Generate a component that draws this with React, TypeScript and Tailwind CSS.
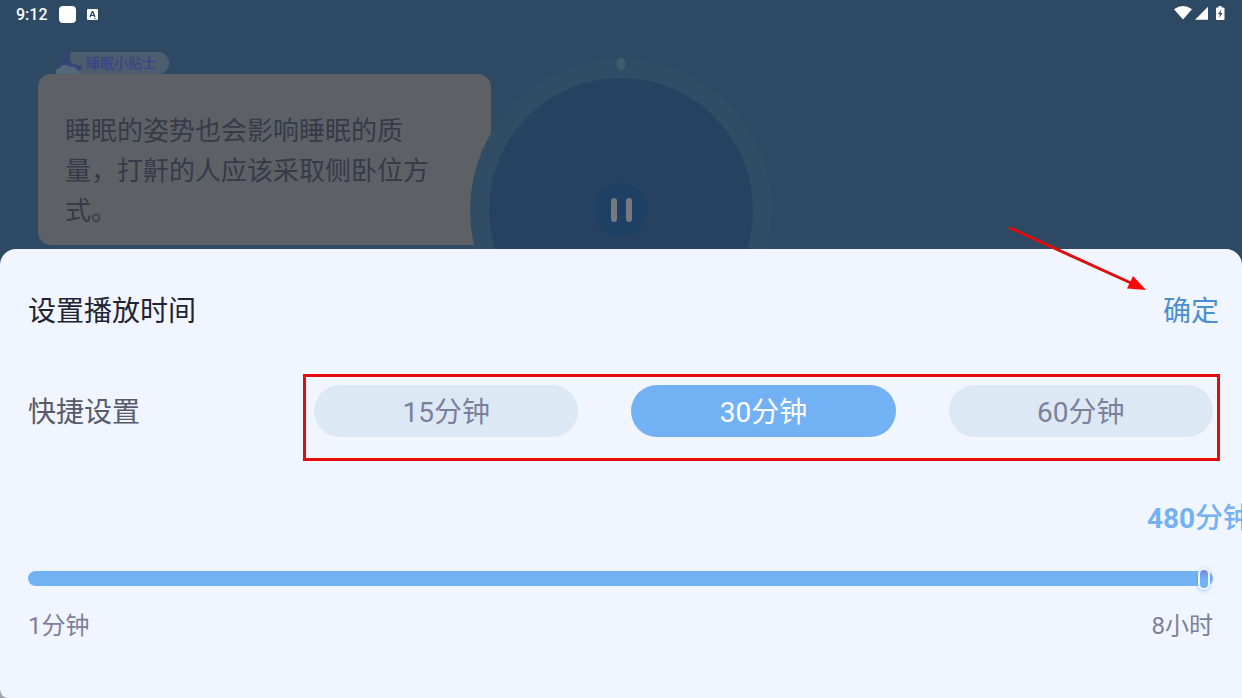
import { useState } from "react";

const presets = [15, 30, 60];
const MIN = 1;
const MAX = 480;

function StatusBar() {
  return (
    <header className="flex h-7 items-center justify-between px-4 text-white">
      <div className="flex items-center gap-[11px]">
        <time className="pt-[2px] text-[16px] leading-5 font-medium">9:12</time>
        <span className="size-[17px] rounded-[4px] bg-white" />
        <svg className="size-[11px]" viewBox="0 0 11 11" aria-hidden="true">
          <rect width="11" height="11" rx="1" fill="#fff" />
          <path d="M3 8 5.2 2.6h.6L8 8M3.9 6.3h3.2" fill="none" stroke="#2d4862" strokeWidth="1.3" />
          <path d="M7 9.6h2.4" stroke="#2d4862" strokeWidth=".7" />
        </svg>
      </div>
      <svg className="h-4 w-[52px]" viewBox="0 0 52 16" fill="#fff" aria-hidden="true">
        <path d="M0 3.2Q9-3 18 3.2L9 13.4z" />
        <path d="M34 .8V13.800H21z" />
        <path d="M44.500 0h3v1.500h2q1 0 1 1v10.500q0 1-1 1h-6.500q-1 0-1-1V2.500q0-1 1-1h1.500z" />
        <path d="M47.300 3.600 44 8.300h1.900l-.7 3.700 3.300-4.900h-2z" fill="#2d4862" />
      </svg>
    </header>
  );
}

function TipCard() {
  return (
    <section className="w-[453px]">
      <div className="ml-[17px] flex h-[22px] w-[114px] items-center">
        <div className="relative flex h-[22px] flex-1 items-center rounded-r-full bg-linear-to-r from-transparent from-10% to-[#4e5d6d] to-15% pl-[31px]">
          <svg className="absolute -top-[2px] left-0 h-[26px] w-[30px]" viewBox="0 0 30 26" aria-hidden="true">
            <defs>
              <linearGradient id="moon" x1="0" y1="0" x2="1" y2="1">
                <stop offset="0" stopColor="#304668" />
                <stop offset="1" stopColor="#38467f" />
              </linearGradient>
            </defs>
            <path d="M2 2H15V20H2z" fill="#2e4963" />
            <path d="M16 .5C8 1 3 6 3 13c0 7 8 11 14 10l8-2c1-2 2-4 2.500-6.500-3 1.500-5 1-7-.5-5 0-8-5-6.500-9 .4-1.800 1-3 2-4.500z" fill="url(#moon)" />
            <path d="M1 24c-1-4 1-6 4-6 1-3 4-4 6-3 2 0 3 1 4 2 3-1 6 0 7 3 2 0 3 2 3 4z" fill="#55677a" />
          </svg>
          <h2 className="text-[14px] leading-5 font-medium whitespace-nowrap text-[#36458a]">睡眠小贴士</h2>
        </div>
      </div>
      <p className="rounded-[13px] bg-[#5d6166] pt-[37px] pr-10 pb-[14px] pl-[27px] text-[26px] leading-10 text-[#363a49]">
        睡眠的姿势也会影响睡眠的质量，打鼾的人应该采取侧卧位方式。
      </p>
    </section>
  );
}

function Dial() {
  return (
    <div className="absolute top-[59px] left-1/2 flex size-[302px] -translate-x-1/2 items-center justify-center rounded-full bg-[#314d66]">
      <span className="absolute -top-[1px] h-3 w-2 rounded-full bg-[#405b69]" />
      <div className="flex size-[264px] items-center justify-center rounded-full bg-[#264260]">
        <button type="button" aria-label="暂停" className="flex size-[54px] items-center justify-center gap-[9px] rounded-full bg-[#1e4062]">
          <span className="h-6 w-[6px] rounded-full bg-[#76797d]" />
          <span className="h-6 w-[6px] rounded-full bg-[#76797d]" />
        </button>
      </div>
    </div>
  );
}

function TimerSheet() {
  const [preset, setPreset] = useState(30);
  const [minutes, setMinutes] = useState(MAX);
  const ratio = (minutes - MIN) / (MAX - MIN);

  return (
    <section role="dialog" aria-labelledby="sheet-title" className="absolute inset-x-0 bottom-0 rounded-t-[16px] bg-[#f1f5ff] pt-[42px] pr-[29px] pb-[54px] pl-7">
      <div className="flex h-[42px] items-center justify-between text-[28px] leading-[42px]">
        <h1 id="sheet-title" className="text-[#212434]">设置播放时间</h1>
        <button type="button" className="-mr-[6px] text-[#4a90d0]">确定</button>
      </div>

      <div className="mt-[52px] flex items-center text-[28px] leading-[42px]">
        <span id="quick-label" className="w-[286px] shrink-0 pt-1 text-[#575b6c]">快捷设置</span>
        <div role="group" aria-labelledby="quick-label" className="relative grid flex-1 grid-cols-3 gap-[53px]">
          {presets.map((value) => (
            <button
              key={value}
              type="button"
              aria-pressed={preset === value}
              onClick={() => setPreset(value)}
              className={
                preset === value
                  ? "h-[52px] rounded-full bg-[#73b1f5] pt-1 text-white"
                  : "h-[52px] rounded-full bg-[#dce8f4] pt-1 text-[#7c809b]"
              }
            >
              {value}分钟
            </button>
          ))}
          <div className="pointer-events-none absolute -top-[11px] -right-[7px] -bottom-6 -left-[11px] border-3 border-[#e60b0b]" />
        </div>
      </div>

      <div className="relative mt-16 h-9">
        <output
          htmlFor="duration"
          className="absolute -translate-x-1/2 text-[28px] leading-9 font-bold whitespace-nowrap text-[#73b1f5]"
          style={{ left: `calc(${ratio} * (100% - 14px))` }}
        >
          {minutes}
          <span className="font-medium">分钟</span>
        </output>
      </div>
      <input
        id="duration"
        type="range"
        aria-label="播放时间"
        min={MIN}
        max={MAX}
        value={minutes}
        onChange={(event) => setMinutes(Number(event.target.value))}
        className="mt-[34px] block h-[15px] w-full appearance-none rounded-full px-[3px] [&::-webkit-slider-thumb]:h-[22px] [&::-webkit-slider-thumb]:w-3 [&::-webkit-slider-thumb]:appearance-none [&::-webkit-slider-thumb]:rounded-full [&::-webkit-slider-thumb]:border-2 [&::-webkit-slider-thumb]:border-[#eef5ff] [&::-webkit-slider-thumb]:bg-linear-to-b [&::-webkit-slider-thumb]:from-[#7a86e0] [&::-webkit-slider-thumb]:to-[#70b4f7] [&::-webkit-slider-thumb]:to-60% [&::-webkit-slider-thumb]:shadow-[0_1px_4px_#5b9be880]"
        style={{ background: `linear-gradient(to right, #73b1f5 ${ratio * 100}%, #dce8f4 ${ratio * 100}%)` }}
      />
      <div className="mt-[22px] flex justify-between text-[24px] leading-9 text-[#7c809b]">
        <span>1分钟</span>
        <span>8小时</span>
      </div>

      <svg className="pointer-events-none absolute -top-[24px] right-[95px] h-[68px] w-[140px]" viewBox="0 0 140 68" aria-hidden="true">
        <path d="M3 3 124 58" stroke="#e00d0d" strokeWidth="3" strokeLinecap="round" />
        <path d="M139 65 120 63.500 126 51z" fill="#ff0505" />
      </svg>
    </section>
  );
}

export default function App() {
  return (
    <div className="bg-[#a5a5a8]">
      <main className="relative min-h-screen overflow-hidden rounded-bl-[8px] bg-[#2e4963] font-[Roboto,'Noto_Sans_CJK_SC',sans-serif]">
        <StatusBar />
        <div className="pt-6 pl-[38px]">
          <TipCard />
        </div>
        <Dial />
        <TimerSheet />
      </main>
    </div>
  );
}
